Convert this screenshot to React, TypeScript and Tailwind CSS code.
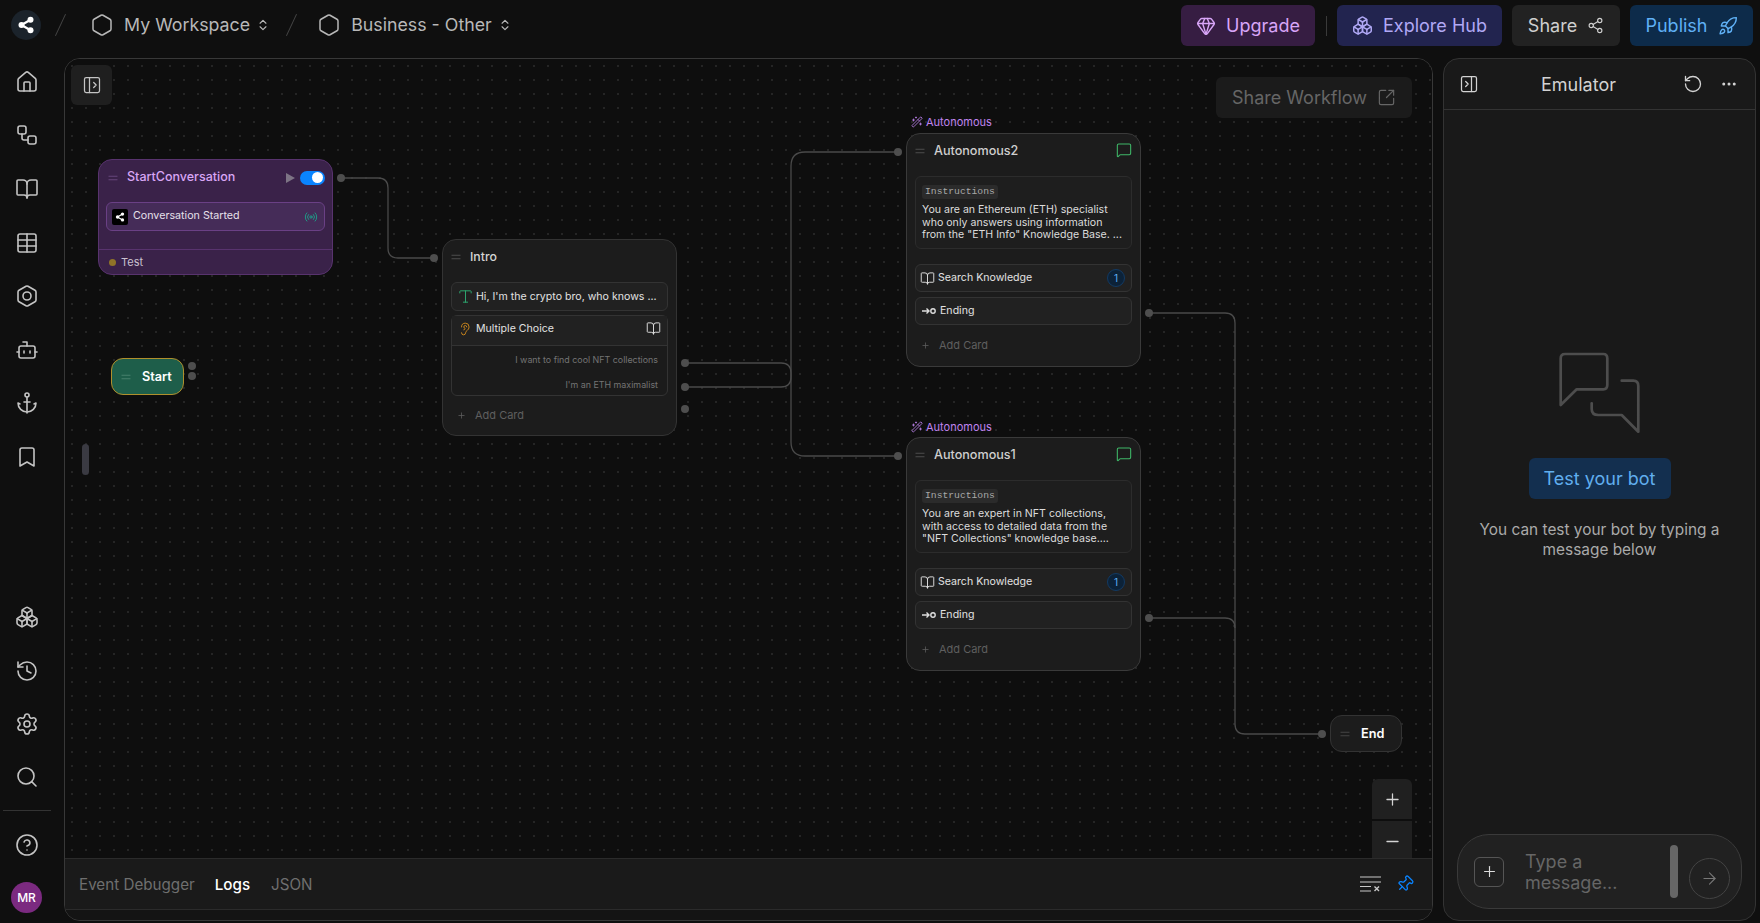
import {
  Anchor,
  ArrowRight,
  BookOpen,
  Bolt,
  Bookmark,
  Bot,
  Boxes,
  ChevronsUpDown,
  CircleHelp,
  Ear,
  Ellipsis,
  Equal,
  Gem,
  Hexagon,
  History,
  House,
  MessageSquare,
  Minus,
  PanelLeftOpen,
  PanelRightClose,
  Pin,
  Plus,
  Radio,
  Rocket,
  RotateCcw,
  Search,
  Settings,
  Share2,
  SquareArrowOutUpRight,
  Table,
  Type,
  WandSparkles,
  Workflow,
} from "lucide-react";
import type { ReactNode } from "react";

// Filled three-dot share mark used for the logo and the trigger card
const ShareMark = ({ size }: { size: number }) => (
  <svg width={size} height={size} viewBox="0 0 24 24" fill="#fff" stroke="#fff">
    <line x1="6" y1="12" x2="18" y2="5" strokeWidth="3" />
    <line x1="6" y1="12" x2="18" y2="19" strokeWidth="3" />
    <circle cx="6" cy="12" r="4" stroke="none" />
    <circle cx="18" cy="5" r="4" stroke="none" />
    <circle cx="18" cy="19" r="4" stroke="none" />
  </svg>
);

const EndingIcon = () => (
  <svg width="15" height="10" viewBox="0 0 15 10" fill="none" stroke="#ddd" strokeWidth="1.4">
    <path d="M1 5h7M5.5 2.5 8 5 5.5 7.5" />
    <circle cx="12" cy="5" r="2.2" />
  </svg>
);

const ClearLogsIcon = () => (
  <svg width="21" height="16" viewBox="0 0 21 16" fill="none" stroke="#c8c8c8" strokeWidth="1.2">
    <path d="M0 1h21M0 6h21M0 10.500h11M0 15h11" />
    <path d="M14.500 10.500 19 15M19 10.500 14.500 15" strokeWidth="1.4" />
  </svg>
);

// Two overlapping speech bubbles of the empty emulator state
const ChatBubbles = () => (
  <svg
    width="100"
    height="85"
    viewBox="100 20 100 85"
    fill="none"
    stroke="#4d4d4d"
    strokeWidth="2.7"
    strokeLinecap="round"
    strokeLinejoin="round"
  >
    <path d="M110.700 75V28.300Q110.700 24 115 24H153.300Q157.300 24 157.300 28.300V55Q157.300 59.300 153.300 59.300H126.700Z" />
    <path d="M171.700 50.700H183.300Q188.300 50.700 188.300 56V101.700L171.700 85H148.300Q141.700 85 141.700 79V73.300" />
  </svg>
);

const Grip = ({ className }: { className: string }) => <Equal size={14} strokeWidth={1.5} className={className} />;

const topNav = [House, Workflow, BookOpen, Table, Bolt, Bot, Anchor, Bookmark];
const bottomNav = [Boxes, History, Settings, Search];

const Sidebar = () => (
  <aside className="flex w-[53px] shrink-0 flex-col items-center text-[#c4c4c4]">
    <div className="-mt-[3px] flex flex-col">
      {topNav.map((Icon, i) => (
        <div key={i} className="flex h-[53.6px] items-center justify-center">
          <Icon size={24} strokeWidth={1.6} />
        </div>
      ))}
    </div>
    <div className="mt-auto flex w-full flex-col items-center pb-[8px]">
      {bottomNav.map((Icon, i) => (
        <div key={i} className="flex h-[53.4px] items-center justify-center">
          <Icon size={24} strokeWidth={1.6} />
        </div>
      ))}
      <div className="mt-[6px] h-px w-[48px] bg-[#333]" />
      <div className="flex h-[68px] items-center justify-center">
        <CircleHelp size={24} strokeWidth={1.6} />
      </div>
      <div className="mt-[3px] flex h-[31px] w-[31px] items-center justify-center rounded-full bg-[#7b2a80] text-[12px] font-medium text-white">
        MR
      </div>
    </div>
  </aside>
);

const HeaderButton = ({ className, children }: { className: string; children: ReactNode }) => (
  <button className={`flex h-[41px] items-center rounded-md text-[18px] ${className}`}>{children}</button>
);

const Header = () => (
  <header className="flex h-[58px] shrink-0 items-start">
    <div className="flex h-[50px] items-center text-[#b8b8b8]">
      <div className="ml-[11px] flex h-[30px] w-[30px] items-center justify-center rounded-full bg-[#1b232b]">
        <ShareMark size={18} />
      </div>
      <span className="ml-[19px] h-[24px] w-px rotate-[25deg] bg-[#444]" />
      <Hexagon size={24} strokeWidth={1.5} className="ml-[29px]" />
      <span className="ml-[10px] text-[17.800px]">My Workspace</span>
      <ChevronsUpDown size={14} strokeWidth={2} className="ml-[6px]" />
      <span className="ml-[21px] h-[24px] w-px rotate-[25deg] bg-[#444]" />
      <Hexagon size={24} strokeWidth={1.5} className="ml-[25px]" />
      <span className="ml-[10px] text-[17.800px]">Business - Other</span>
      <ChevronsUpDown size={14} strokeWidth={2} className="ml-[6px]" />
    </div>
    <div className="mt-[5px] ml-auto flex items-center pr-[7px]">
      <HeaderButton className="w-[134px] justify-center gap-[10px] bg-[#361d42] text-[#d8a5f7]">
        <Gem size={20} strokeWidth={1.7} />
        Upgrade
      </HeaderButton>
      <span className="mx-[10.5px] h-[20px] w-px bg-[#3a3a3a]" />
      <HeaderButton className="w-[165px] justify-center gap-[10px] bg-[#22244f] text-[#b0a8f5]">
        <Boxes size={21} strokeWidth={1.7} />
        Explore Hub
      </HeaderButton>
      <HeaderButton className="ml-[10px] w-[108px] justify-center gap-[10px] bg-[#222] text-[#cfcfcf]">
        Share
        <Share2 size={17} strokeWidth={1.6} />
      </HeaderButton>
      <HeaderButton className="ml-[10px] w-[123px] justify-center gap-[10px] bg-[#0d2b4a] text-[#5fb0f5]">
        Publish
        <Rocket size={20} strokeWidth={1.7} />
      </HeaderButton>
    </div>
  </header>
);

const AddCard = () => (
  <div className="flex items-center gap-[9px] pl-[6px] text-[11px] text-[#5f5f5f]">
    <Plus size={9} />
    Add Card
  </div>
);

const Row = ({ children, className }: { children: ReactNode; className: string }) => (
  <div className={`flex items-center rounded-md border border-[#333] bg-[#212121] text-[10.6px] text-[#e2e2e2] ${className}`}>
    {children}
  </div>
);

const AutonomousNode = ({
  name,
  lines,
  labelClass,
  nodeClass,
}: {
  name: string;
  lines: string[];
  labelClass: string;
  nodeClass: string;
}) => (
  <>
    <div className={`absolute flex items-center gap-[3px] text-[11px] text-[#c084f0] ${labelClass}`}>
      <WandSparkles size={12} strokeWidth={1.6} />
      Autonomous
    </div>
    <div className={`absolute h-[234px] w-[235px] rounded-[14px] border border-[#3a3a3a] bg-[#1c1c1c] px-[8px] ${nodeClass}`}>
      <div className="-ml-[2px] flex h-[34px] items-center">
        <Grip className="text-[#555]" />
        <span className="ml-[7px] text-[12.6px] font-medium text-[#cfcfcf]">{name}</span>
        <MessageSquare size={16} strokeWidth={1.6} className="ml-auto -translate-y-[1px] text-[#3fb868]" />
      </div>
      <div className="mt-[8px] h-[73px] rounded-md border border-[#2c2c2c] bg-[#1e1e1e] pt-[8px] pl-[6px]">
        <span className="block w-fit rounded-[3px] bg-[#2b2b2b] px-[3px] font-['Liberation_Mono',monospace] text-[9.7px] leading-[14px] text-[#a8a8a8]">
          Instructions
        </span>
        <div className="mt-[5px] text-[10.6px] leading-[12.7px] whitespace-nowrap text-[#dcdcdc]">
          {lines.map((line) => (
            <div key={line}>{line}</div>
          ))}
        </div>
      </div>
      <Row className="mt-[15px] h-[28px] pr-[6px] pl-[4px]">
        <BookOpen size={15} strokeWidth={1.5} />
        <span className="ml-[3px]">Search Knowledge</span>
        <span className="ml-auto flex h-[18px] w-[18px] items-center justify-center rounded-full border border-[#123a63] bg-[#0c2238] text-[10px] text-[#5fb0f5]">
          1
        </span>
      </Row>
      <Row className="mt-[5px] h-[28px] pl-[5px]">
        <EndingIcon />
        <span className="ml-[4px]">Ending</span>
      </Row>
      <div className="mt-[12px]">
        <AddCard />
      </div>
    </div>
  </>
);

const Edges = () => (
  <svg className="absolute inset-0 h-full w-full" fill="none" stroke="#4a4a4a" strokeWidth="1.3">
    <g transform="translate(-65 -59)">
      <path d="M341 178H378Q388 178 388 188V248Q388 258 398 258H434" />
      <path d="M685 363H781Q791 363 791 373V377Q791 387 781 387H685" />
      <path d="M898 152H805Q791 152 791 166V442Q791 456 805 456H898" />
      <path d="M1149 313H1225Q1235 313 1235 323V724Q1235 734 1245 734H1322" />
      <path d="M1149 618H1225Q1235 618 1235 628" />
      <g fill="#4e4e4e" stroke="none">
        {[
          [341, 178],
          [434, 258],
          [192, 366],
          [192, 376],
          [685, 363],
          [685, 387],
          [685, 409],
          [898, 152],
          [898, 456],
          [1149, 313],
          [1149, 618],
          [1322, 734],
        ].map(([x, y]) => (
          <circle key={`${x}-${y}`} cx={x} cy={y} r="4" />
        ))}
      </g>
    </g>
  </svg>
);

const Canvas = () => (
  <div className="relative min-h-0 flex-1 overflow-hidden bg-[#0e0e0e] bg-[radial-gradient(circle,#252525_0.8px,transparent_1px)] bg-[length:14px_14px]">
    <Edges />

    <button className="absolute top-[6px] left-[6px] flex h-[40px] w-[41px] items-center justify-center rounded-md bg-[#1f1f1f] text-[#c4c4c4]">
      <PanelLeftOpen size={20} strokeWidth={1.5} />
    </button>

    <div className="absolute top-[18px] left-[1151px] flex h-[41px] w-[196px] items-center justify-center gap-[10px] rounded-md bg-[#1b1b1b] text-[18px] text-[#666]">
      Share Workflow
      <SquareArrowOutUpRight size={19} strokeWidth={1.5} />
    </div>

    {/* StartConversation */}
    <div className="absolute top-[100px] left-[33px] h-[116px] w-[235px] rounded-[14px] border border-[#58336e] bg-[#3a2249]">
      <div className="flex h-[35px] items-center pr-[7px] pl-[7px]">
        <Grip className="text-[#6d4c82]" />
        <span className="ml-[7px] text-[12.5px] font-medium text-[#d8a6f5]">StartConversation</span>
        <svg width="9" height="10" viewBox="0 0 9 10" className="ml-auto fill-[#7d7485]">
          <path d="M0 0 9 5 0 10Z" />
        </svg>
        <span className="ml-[5px] flex h-[14px] w-[25px] items-center justify-end rounded-full bg-[#0a84ff] pr-[2px]">
          <span className="h-[11px] w-[11px] rounded-full bg-white" />
        </span>
      </div>
      <div className="mx-[7px] mt-[7px] flex h-[29px] items-center rounded-md border border-[#6a4085] bg-[#452c58] pr-[6px] pl-[5px] text-[10.7px] text-[#e6e0ea]">
        <span className="flex h-[16px] w-[16px] items-center justify-center rounded-[2px] bg-black">
          <ShareMark size={10} />
        </span>
        <span className="ml-[5px]">Conversation Started</span>
        <Radio size={14} strokeWidth={1.5} className="ml-auto text-[#1aa88c]" />
      </div>
      <div className="mt-[18px] flex h-[26px] items-center gap-[5px] border-t border-[#58336e] pl-[10px] text-[11px] text-[#c9c0cf]">
        <span className="h-[7px] w-[7px] rounded-full bg-[#8f7428]" />
        Test
      </div>
    </div>

    {/* Start */}
    <div className="absolute top-[299px] left-[46px] flex h-[37px] w-[73px] items-center rounded-[12px] border border-[#b08f2c] bg-[#1e5e4a] pl-[7px]">
      <Grip className="text-[#4d8571]" />
      <span className="ml-[9px] text-[12.7px] font-semibold text-white">Start</span>
    </div>

    {/* Intro */}
    <div className="absolute top-[180px] left-[377px] h-[197px] w-[235px] rounded-[14px] border border-[#333] bg-[#1c1c1c] px-[8px]">
      <div className="-ml-[2px] flex h-[34px] items-center">
        <Grip className="text-[#555]" />
        <span className="ml-[7px] text-[12.3px] font-medium text-[#d4d4d4]">Intro</span>
      </div>
      <Row className="mt-[8px] h-[29px] pl-[5px]">
        <Type size={17} strokeWidth={1.4} className="text-[#2ea66f]" />
        <span className="ml-[2px]">Hi, I'm the crypto bro, who knows ...</span>
      </Row>
      <div className="mt-[4px] h-[81px] rounded-md border border-[#333] bg-[#1b1b1b]">
        <div className="flex h-[30px] items-center border-b border-[#333] bg-[#212121] pr-[6px] pb-[4px] pl-[6px] text-[10.6px] text-[#e2e2e2]">
          <Ear size={14} strokeWidth={1.6} className="text-[#d18a1c]" />
          <span className="ml-[4px]">Multiple Choice</span>
          <BookOpen size={15} strokeWidth={1.5} className="ml-auto" />
        </div>
        <div className="pt-[7px] pr-[9px] text-right text-[8.9px] text-[#747474]">
          <div className="h-[25px] leading-[14px]">I want to find cool NFT collections</div>
          <div className="leading-[14px]">I'm an ETH maximalist</div>
        </div>
      </div>
      <div className="mt-[11px]">
        <AddCard />
      </div>
    </div>

    <AutonomousNode
      name="Autonomous2"
      labelClass="top-[55px] left-[846px]"
      nodeClass="top-[74px] left-[841px]"
      lines={[
        "You are an Ethereum (ETH) specialist",
        "who only answers using information",
        'from the "ETH Info" Knowledge Base. ...',
      ]}
    />
    <AutonomousNode
      name="Autonomous1"
      labelClass="top-[360px] left-[846px]"
      nodeClass="top-[378px] left-[841px]"
      lines={[
        "You are an expert in NFT collections,",
        "with access to detailed data from the",
        '"NFT Collections" knowledge base....',
      ]}
    />

    {/* End */}
    <div className="absolute top-[656px] left-[1265px] flex h-[37px] w-[72px] items-center rounded-[12px] border border-[#333] bg-[#1c1c1c] pl-[7px]">
      <Grip className="text-[#4a4a4a]" />
      <span className="ml-[9px] text-[12.7px] font-semibold text-white">End</span>
    </div>

    {/* Zoom controls */}
    <div className="absolute top-[720px] left-[1307px] flex w-[40px] flex-col gap-[2px] text-[#d4d4d4]">
      <button className="flex h-[40px] items-center justify-center rounded-t-md bg-[#202020]">
        <Plus size={19} strokeWidth={1.6} />
      </button>
      <button className="flex h-[40px] items-center justify-center bg-[#202020]">
        <Minus size={19} strokeWidth={1.6} />
      </button>
    </div>

    {/* Side panel drag handle */}
    <span className="absolute top-[385px] left-[17px] h-[31px] w-[7px] rounded-sm bg-[#3a3a42]" />
  </div>
);

const BottomTabs = () => (
  <div className="shrink-0">
    <div className="flex h-[52px] items-center border-y border-[#2b2b2b] bg-[#1a1a1a] pr-[18px] pl-[14px] text-[15.2px]">
      <span className="translate-y-[1px] text-[#6f6f6f]">Event Debugger</span>
      <span className="ml-[20px] translate-y-[1px] font-medium text-white">Logs</span>
      <span className="ml-[21px] translate-y-[1px] text-[#6f6f6f]">JSON</span>
      <span className="ml-auto">
        <ClearLogsIcon />
      </span>
      <Pin size={18} strokeWidth={1.7} className="ml-[15px] rotate-45 text-[#0a84ff]" />
    </div>
    <div className="h-[10px] bg-[#141414]" />
  </div>
);

const Emulator = () => (
  <section className="flex w-[313px] shrink-0 flex-col overflow-hidden rounded-[16px] border border-[#333] bg-[#191919]">
    <div className="flex h-[51px] shrink-0 items-center border-b border-[#333] pr-[17px] pl-[15px] text-[#d2d2d2]">
      <PanelRightClose size={20} strokeWidth={1.5} />
      <span className="ml-[62px] text-[18px]">Emulator</span>
      <RotateCcw size={20} strokeWidth={1.6} className="ml-auto" />
      <Ellipsis size={18} strokeWidth={2} className="ml-[17px]" />
    </div>
    <div className="flex min-h-0 flex-1 flex-col items-center pt-[240px]">
      <ChatBubbles />
      <div className="mt-[23px] flex h-[41px] w-[142px] items-center justify-center rounded-md bg-[#132f4f] text-[18px] text-[#60aeee]">
        Test your bot
      </div>
      <p className="mt-[21px] w-[250px] text-center text-[15.4px] leading-[20px] text-[#aaa]">
        You can test your bot by typing a message below
      </p>
    </div>
    <div className="mx-[13px] mb-[11px] flex h-[75px] shrink-0 items-center rounded-[32px] border border-[#3a3a3a] bg-[#212121] pr-[11px] pl-[16px]">
      <span className="flex h-[30px] w-[30px] items-center justify-center rounded-md border border-[#555] text-[#ddd]">
        <Plus size={17} strokeWidth={1.6} />
      </span>
      <span className="ml-[21px] w-[145px] text-[18px] leading-[21px] text-[#666]">
        Type a
        <br />
        message...
      </span>
      <span className="h-[53px] w-[8px] rounded-full bg-[#666]" />
      <span className="mt-[13px] ml-[11px] flex h-[41px] w-[41px] items-center justify-center rounded-full border border-[#444] text-[#777]">
        <ArrowRight size={19} strokeWidth={1.4} />
      </span>
    </div>
  </section>
);

export default function App() {
  return (
    <div className="flex h-[923px] w-[1760px] flex-col overflow-hidden bg-[#0f0f0f] font-['Inter',sans-serif]">
      <Header />
      <div className="flex min-h-0 flex-1 pb-[2px]">
        <Sidebar />
        <div className="ml-[11px] flex w-[1369px] shrink-0 flex-col overflow-hidden rounded-[16px] border border-[#383838]">
          <Canvas />
          <BottomTabs />
        </div>
        <div className="ml-[10px] flex">
          <Emulator />
        </div>
      </div>
    </div>
  );
}
